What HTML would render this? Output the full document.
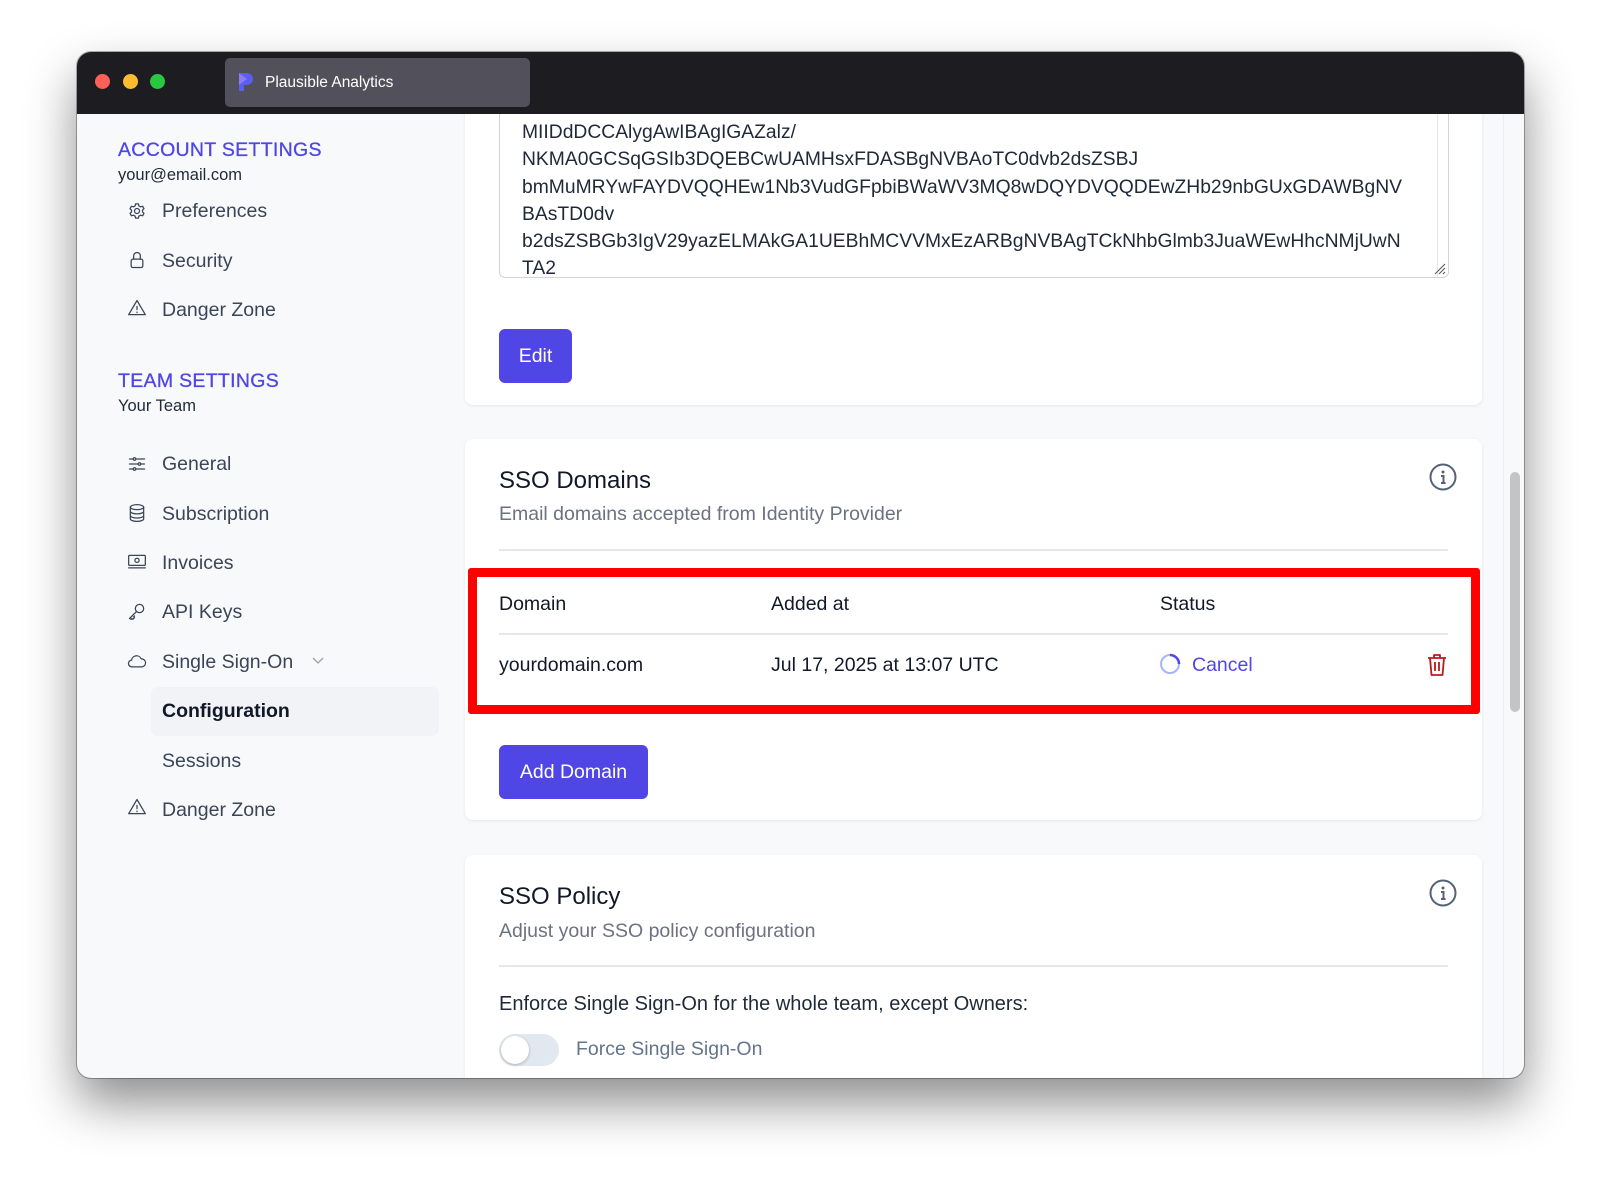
<!DOCTYPE html>
<html><head><meta charset="utf-8"><style>
*{box-sizing:border-box;margin:0;padding:0}
body{width:1600px;height:1181px;background:#fff;font-family:"Liberation Sans",sans-serif;position:relative;overflow:hidden}
.win{position:absolute;left:77px;top:52px;width:1447px;height:1026px;border-radius:14px;overflow:hidden;background:#f8f9fb;box-shadow:0 25px 50px rgba(0,0,0,.45),0 0 0 1px rgba(0,0,0,.3)}
.in{position:absolute;left:-10px;top:0;width:1467px;height:1026px}
.tb{position:absolute;left:0;top:0;right:0;height:62px;background:#1d1c21;z-index:5}
.dot{position:absolute;top:22px;width:15px;height:15px;border-radius:50%}
.tab{position:absolute;left:158px;top:6px;width:305px;height:49px;background:#52505b;border-radius:5px;color:#fff;font-size:15.5px;line-height:49px;padding-left:40px}
.a{position:absolute;white-space:nowrap}
.side{color:#3b4558;font-size:19.5px}
.hd{color:#4f46e5;font-size:19.5px;letter-spacing:.3px;font-weight:500;-webkit-text-stroke:.3px #4f46e5}
.card{position:absolute;background:#fff;border-radius:8px;box-shadow:0 1px 3px rgba(0,0,0,.08)}
.btn{position:absolute;background:#4f46e5;color:#fff;border-radius:6px;font-size:19.5px;text-align:center}
.t{font-size:19.5px;color:#111827}
.g{font-size:19.5px;color:#6b7280}
.ic{position:absolute;left:60px}
svg.i{width:20px;height:20px;fill:none;stroke:#3b4558;stroke-width:1.5;stroke-linecap:round;stroke-linejoin:round}
</style></head><body>
<div class="win"><div class="in">
<div class="tb">
<div class="dot" style="left:28px;background:#fe5f57"></div>
<div class="dot" style="left:56px;background:#febc2e"></div>
<div class="dot" style="left:83px;background:#28c840"></div>
<div class="tab"><svg style="position:absolute;left:12px;top:13px" width="18" height="22" viewBox="0 0 18 22"><path d="M2 2h8a6 6 0 010 12H7v6H2z" fill="#5b5ef0"/><path d="M2 2l8 6-8 6z" fill="#8b7cf6"/></svg>Plausible Analytics</div>
</div>
<div class="a hd" style="left:51px;top:87px">ACCOUNT SETTINGS</div>
<div class="a" style="left:51px;top:114px;font-size:16.5px;color:#1f2937">your@email.com</div>
<div class="a side" style="left:95px;top:148px">Preferences</div>
<svg class="i ic" style="top:149px" viewBox="0 0 24 24"><circle cx="12" cy="12" r="3"/><path d="M10.3 3.5h3.4l.6 2.4 2 1.1 2.4-.7 1.7 2.9-1.8 1.7v2.2l1.8 1.7-1.7 2.9-2.4-.7-2 1.1-.6 2.4h-3.4l-.6-2.4-2-1.1-2.4.7-1.7-2.9 1.8-1.7v-2.2L3.6 9.2l1.7-2.9 2.4.7 2-1.1z"/></svg>
<div class="a side" style="left:95px;top:198px">Security</div>
<svg class="i ic" style="top:198px" viewBox="0 0 24 24"><rect x="5" y="11" width="14" height="10" rx="2"/><path d="M8 11V7a4 4 0 018 0v4"/></svg>
<div class="a side" style="left:95px;top:247px">Danger Zone</div>
<svg class="i ic" style="top:246px" viewBox="0 0 24 24"><path d="M12 3L2 20h20z"/><path d="M12 10v4M12 17v.5"/></svg>
<div class="a hd" style="left:51px;top:318px">TEAM SETTINGS</div>
<div class="a" style="left:51px;top:345px;font-size:16.5px;color:#1f2937">Your Team</div>
<div class="a side" style="left:95px;top:401px">General</div>
<svg class="i ic" style="top:402px" viewBox="0 0 24 24"><path d="M3 6h18M3 12h18M3 18h18"/><circle cx="9" cy="6" r="1.5" fill="#fff"/><circle cx="15" cy="12" r="1.5" fill="#fff"/><circle cx="9" cy="18" r="1.5" fill="#fff"/></svg>
<div class="a side" style="left:95px;top:451px">Subscription</div>
<svg class="i ic" style="top:451px" viewBox="0 0 24 24"><ellipse cx="12" cy="5" rx="8" ry="3"/><path d="M4 5v14c0 1.7 3.6 3 8 3s8-1.3 8-3V5M4 10c0 1.7 3.6 3 8 3s8-1.3 8-3M4 15c0 1.7 3.6 3 8 3s8-1.3 8-3"/></svg>
<div class="a side" style="left:95px;top:500px">Invoices</div>
<svg class="i ic" style="top:500px" viewBox="0 0 24 24"><rect x="2" y="4" width="20" height="12" rx="1"/><circle cx="12" cy="10" r="2.5"/><path d="M2 19h20"/></svg>
<div class="a side" style="left:95px;top:549px">API Keys</div>
<svg class="i ic" style="top:549px" viewBox="0 0 24 24"><circle cx="15" cy="9" r="5"/><path d="M11.5 12.5L3 21l2 1 1-1 1 1 2-2-1-1 1-1"/></svg>
<div class="a side" style="left:95px;top:599px">Single Sign-On</div>
<svg class="i ic" style="top:599px" viewBox="0 0 24 24"><path d="M6 19a4 4 0 01-.5-8 6 6 0 0111.5-1.5A4.5 4.5 0 0118 19z"/></svg>
<svg style="position:absolute;left:245px;top:605px" width="12" height="8" viewBox="0 0 12 8"><path d="M1 1l5 5 5-5" stroke="#9ca3af" fill="none" stroke-width="1.3"/></svg>
<div class="a" style="left:84px;top:635px;width:288px;height:49px;background:#f1f3f7;border-radius:7px"></div>
<div class="a" style="left:95px;top:648px;font-size:19.5px;font-weight:bold;color:#111827">Configuration</div>
<div class="a side" style="left:95px;top:698px">Sessions</div>
<div class="a side" style="left:95px;top:747px">Danger Zone</div>
<svg class="i ic" style="top:745px" viewBox="0 0 24 24"><path d="M12 3L2 20h20z"/><path d="M12 10v4M12 17v.5"/></svg>
<div class="a" style="left:1443px;top:420px;width:10px;height:240px;background:#c4c4c4;border-radius:5px"></div>
<div class="a" style="left:1436px;top:62px;width:1px;height:965px;background:#eceef2"></div>
<div class="card" style="left:398px;top:40px;width:1017px;height:313px"></div>
<div class="a" style="left:432px;top:50px;width:950px;height:176px;border:1px solid #d1d5db;border-top:none;border-radius:0 0 6px 6px;background:#fff;overflow:hidden">
<div style="position:absolute;left:22px;top:17px;font-size:19.3px;line-height:27.3px;color:#1f2937;white-space:pre">MIIDdDCCAlygAwIBAgIGAZalz/
NKMA0GCSqGSIb3DQEBCwUAMHsxFDASBgNVBAoTC0dvb2dsZSBJ
bmMuMRYwFAYDVQQHEw1Nb3VudGFpbiBWaWV3MQ8wDQYDVQQDEwZHb29nbGUxGDAWBgNV
BAsTD0dv
b2dsZSBGb3IgV29yazELMAkGA1UEBhMCVVMxEzARBgNVBAgTCkNhbGlmb3JuaWEwHhcNMjUwN
TA2</div>
<div style="position:absolute;right:10px;top:0;width:1px;height:176px;background:#e5e7eb"></div>
<svg style="position:absolute;right:2px;bottom:2px" width="14" height="14"><path d="M13 3L3 13M13 7L7 13M13 11l-2 2" stroke="#555" stroke-width="1"/></svg>
</div>
<div class="btn" style="left:432px;top:277px;width:73px;height:54px;line-height:54px">Edit</div>
<div class="card" style="left:398px;top:387px;width:1017px;height:381px"></div>
<div class="a" style="left:432px;top:415px;font-size:24px;color:#111827">SSO Domains</div>
<div class="a g" style="left:432px;top:451px">Email domains accepted from Identity Provider</div>
<svg class="a" style="left:1362px;top:411px" width="28" height="28" viewBox="0 0 28 28"><circle cx="14" cy="14" r="12.5" fill="none" stroke="#556276" stroke-width="2"/><circle cx="14" cy="9" r="1.5" fill="#556276"/><path d="M12 13h2.5v7M12 20h4.5" stroke="#556276" stroke-width="2" fill="none"/></svg>
<div class="a" style="left:432px;top:497px;width:949px;height:2px;background:#e5e7eb"></div>
<div class="a t" style="left:432px;top:541px">Domain</div>
<div class="a t" style="left:704px;top:541px">Added at</div>
<div class="a t" style="left:1093px;top:541px">Status</div>
<div class="a" style="left:432px;top:581px;width:949px;height:2px;background:#e5e7eb"></div>
<div class="a t" style="left:432px;top:602px">yourdomain.com</div>
<div class="a t" style="left:704px;top:602px">Jul 17, 2025 at 13:07 UTC</div>
<svg class="a" style="left:1092px;top:601px" width="22" height="22" viewBox="0 0 22 22"><circle cx="11" cy="11" r="9" fill="none" stroke="#a5b4fc" stroke-width="2"/><path d="M11 2a9 9 0 019 9" fill="none" stroke="#4f46e5" stroke-width="2.5"/></svg>
<div class="a" style="left:1125px;top:602px;font-size:19.5px;color:#4f46e5">Cancel</div>
<svg class="a" style="left:1359px;top:601px" width="22" height="24" viewBox="0 0 22 24"><path d="M2 5h18M8 5V2h6v3M4 5l1.5 17h11L18 5M9 9v9M13 9v9" fill="none" stroke="#b91c1c" stroke-width="1.8" stroke-linejoin="round"/></svg>
<div class="a" style="left:401px;top:516px;width:1012px;height:146px;border:9px solid #ff0000;border-radius:3px"></div>
<div class="btn" style="left:432px;top:693px;width:149px;height:54px;line-height:54px">Add Domain</div>
<div class="card" style="left:398px;top:803px;width:1017px;height:260px"></div>
<div class="a" style="left:432px;top:831px;font-size:24px;color:#111827">SSO Policy</div>
<div class="a g" style="left:432px;top:868px">Adjust your SSO policy configuration</div>
<svg class="a" style="left:1362px;top:827px" width="28" height="28" viewBox="0 0 28 28"><circle cx="14" cy="14" r="12.5" fill="none" stroke="#556276" stroke-width="2"/><circle cx="14" cy="9" r="1.5" fill="#556276"/><path d="M12 13h2.5v7M12 20h4.5" stroke="#556276" stroke-width="2" fill="none"/></svg>
<div class="a" style="left:432px;top:913px;width:949px;height:2px;background:#e5e7eb"></div>
<div class="a t" style="left:432px;top:941px;color:#1f2937;font-size:20px">Enforce Single Sign-On for the whole team, except Owners:</div>
<div class="a" style="left:432px;top:982px;width:60px;height:32px;border-radius:16px;background:#e2e8f0"></div>
<div class="a" style="left:434px;top:984px;width:28px;height:28px;border-radius:50%;background:#fff;box-shadow:0 1px 3px rgba(0,0,0,.25)"></div>
<div class="a" style="left:509px;top:986px;font-size:19.5px;color:#64748b">Force Single Sign-On</div>
</div></div>
</body></html>
